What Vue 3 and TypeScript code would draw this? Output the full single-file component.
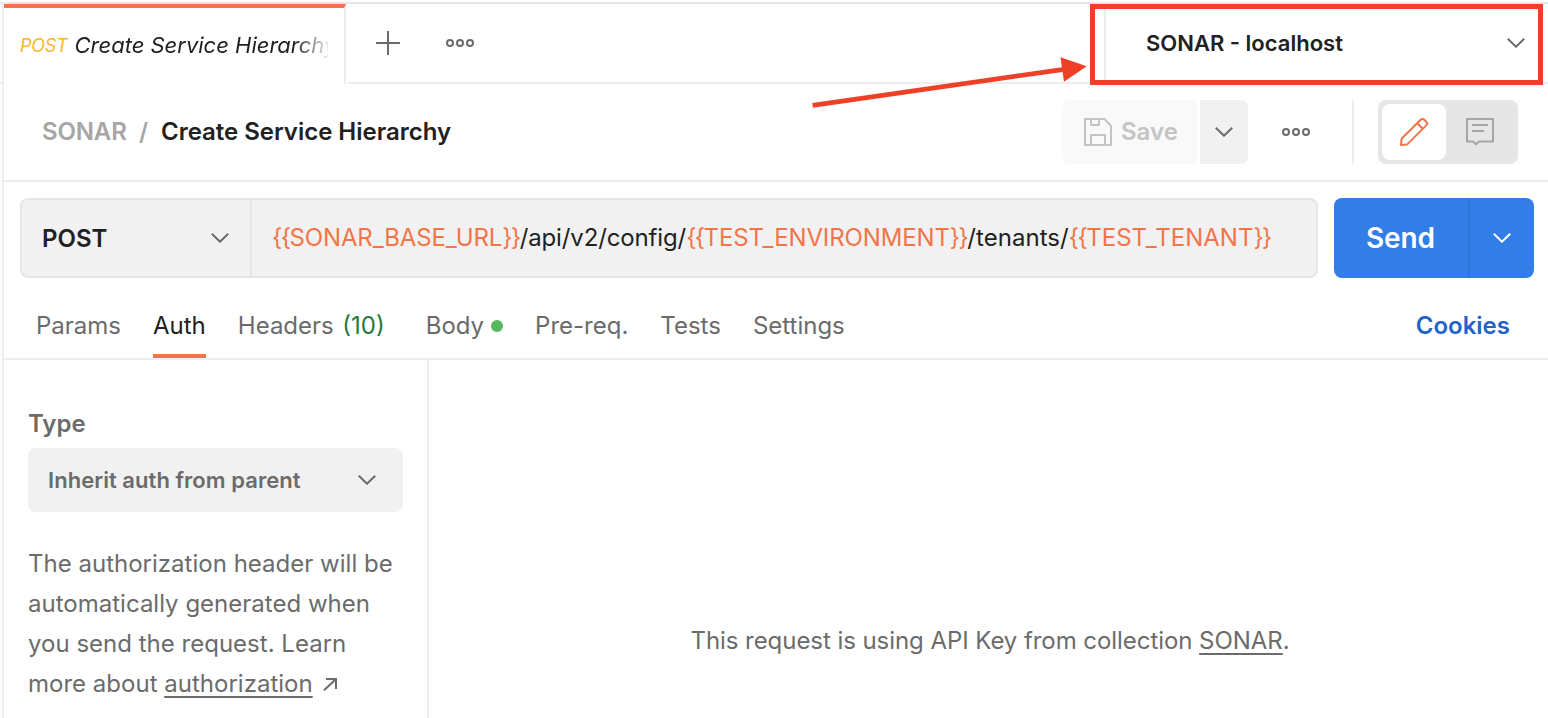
<script setup lang="ts">
import { h, type FunctionalComponent } from 'vue'

interface RequestTab {
  label: string
  count?: string
  dot?: boolean
  active?: boolean
}

interface UrlPart {
  text: string
  kind: 'path' | 'variable'
  spacing: 'tight' | 'normal' | 'loose'
}

const requestTabs: RequestTab[] = [
  { label: 'Params' },
  { label: 'Auth', active: true },
  { label: 'Headers', count: '(10)' },
  { label: 'Body', dot: true },
  { label: 'Pre-req.' },
  { label: 'Tests' },
  { label: 'Settings' },
]

const url: UrlPart[] = [
  { text: 'SONAR_BASE_URL', kind: 'variable', spacing: 'tight' },
  { text: '/api/v2/config/', kind: 'path', spacing: 'tight' },
  { text: 'TEST_ENVIRONMENT', kind: 'variable', spacing: 'tight' },
  { text: '/tenants/', kind: 'path', spacing: 'loose' },
  { text: 'TEST_TENANT', kind: 'variable', spacing: 'normal' },
]

const Chevron: FunctionalComponent = () =>
  h('svg', { width: 18, height: 10, viewBox: '0 0 18 10', fill: 'none', stroke: 'currentColor', 'stroke-width': 2 }, [
    h('path', { d: 'M.8.8 9 8.7 17.2.8' }),
  ])

const Dots: FunctionalComponent = () =>
  h(
    'svg',
    { width: 28, height: 8, viewBox: '0 0 28 8', fill: 'none', stroke: 'currentColor', 'stroke-width': 2 },
    [4, 14, 24].map((cx) => h('circle', { cx, cy: 4, r: 3 })),
  )
</script>

<template>
  <div class="window">
    <div class="gutter"><i></i></div>
    <main class="pane">
      <div class="tabbar">
        <div class="file-tab">
          <span class="verb">POST</span>
          <span class="file-name">Create Service Hierarchy</span>
        </div>
        <div class="tab-tools">
          <svg width="24" height="24" viewBox="0 0 24 24" fill="none" stroke="currentColor" stroke-width="2">
            <path d="M12 0v24M0 12h24" />
          </svg>
          <Dots />
        </div>
        <div class="environment">
          <span>SONAR - localhost</span>
          <Chevron />
        </div>
      </div>

      <header class="title-row">
        <div class="crumbs">
          <span class="parent">SONAR</span>
          <span class="slash">/</span>
          <span class="current">Create Service Hierarchy</span>
        </div>
        <button class="save">
          <svg width="28" height="28" viewBox="0 0 28 28" fill="none" stroke="currentColor" stroke-width="2" stroke-linejoin="round">
            <path d="M1 1h19.5L27 8v19H1z" />
            <path d="M7 1v6h8V1M7 27V17h14v10" />
          </svg>
          <span>Save</span>
        </button>
        <button class="save-more"><Chevron /></button>
        <div class="more"><Dots /></div>
        <div class="mode">
          <span class="mode-on">
            <svg width="28" height="28" viewBox="0 0 28 28" fill="none" stroke="currentColor" stroke-width="2" stroke-linejoin="round">
              <path d="M1 27 1.600 20.800 20.400 2c1.300-1.300 2.800-1.300 4.100 0l1.500 1.500c1.300 1.300 1.300 2.800 0 4.100L7.200 26.400z" />
              <path d="M17.200 5.200 22.800 10.800" />
            </svg>
          </span>
          <span class="mode-off">
            <svg width="28" height="28" viewBox="0 0 28 28" fill="none" stroke="currentColor" stroke-width="2" stroke-linejoin="round">
              <path d="M1 1h26v22.500H13L10 26.200 7 23.500H1z" />
              <path d="M6 7h16M6 13h12" />
            </svg>
          </span>
        </div>
      </header>

      <div class="request-row">
        <div class="request-box">
          <div class="method"><span>POST</span><Chevron /></div>
          <div class="url">
            <template v-for="part in url" :key="part.text">
              <span v-if="part.kind === 'variable'" class="variable"><span class="brace" v-text="'{{'"></span><span :class="part.spacing">{{ part.text }}</span><span class="brace" v-text="'}}'"></span></span>
              <span v-else :class="part.spacing">{{ part.text }}</span>
            </template>
          </div>
        </div>
        <div class="send">
          <span class="send-label">Send</span>
          <span class="send-more"><Chevron /></span>
        </div>
      </div>

      <nav class="request-tabs">
        <a v-for="tab in requestTabs" :key="tab.label" :class="{ active: tab.active, counted: tab.count }">
          {{ tab.label }}<em v-if="tab.count">{{ tab.count }}</em><i v-if="tab.dot"></i>
        </a>
        <a class="cookies">Cookies</a>
      </nav>

      <div class="content">
        <aside class="auth-side">
          <div class="type-label">Type</div>
          <div class="type-select"><span>Inherit auth from parent</span><Chevron /></div>
          <p>
            The authorization header will be<br />automatically generated when<br />you send the request. Learn<br />more about
            <u>authorization</u>
            <svg width="14" height="13" viewBox="0 0 14 13" fill="none" stroke="currentColor" stroke-width="2">
              <path d="M3 1h10v10M13 1 1 12.300" />
            </svg>
          </p>
        </aside>
        <section class="auth-main">This request is using API Key from collection <u>SONAR</u>.</section>
      </div>
    </main>

    <svg class="callout" width="1548" height="120" viewBox="0 0 1548 120">
      <rect x="1092.500" y="6.500" width="448" height="76" fill="none" stroke="#ee4027" stroke-width="5" />
      <path d="M812.600 105.400 1064 69.300" stroke="#ee4027" stroke-width="4.800" />
      <path d="M1060.500 57.300 1086.700 66.300 1064 81.800z" fill="#ee4027" />
    </svg>
  </div>
</template>

<style>
body {
  margin: 0;
  background: #fff;
}
</style>

<style scoped>
.window {
  position: relative;
  box-sizing: border-box;
  display: flex;
  width: 1548px;
  height: 718px;
  padding-top: 2px;
  overflow: hidden;
  font: 400 24px/40px Inter, 'Liberation Sans', sans-serif;
  color: #6b6b6b;
}
.window * {
  box-sizing: border-box;
}
.window svg {
  display: block;
  flex: none;
}
.gutter {
  width: 4px;
  border-top: 2px solid #e6e6e6;
  border-right: 2px solid #ededed;
  padding-top: 78px;
  background: #fdfdfd;
}
.gutter i {
  display: block;
  height: 2px;
  background: #ededed;
}
.pane {
  flex: 1;
  display: flex;
  flex-direction: column;
  min-width: 0;
  border-top: 2px solid #e6e6e6;
}
.tabbar {
  display: flex;
  height: 80px;
}
.file-tab {
  display: flex;
  align-items: center;
  width: 342px;
  margin-right: 2px;
  padding: 0 16px;
  border-top: 4px solid #f27549;
  border-right: 2px solid #ededed;
  font-style: italic;
  white-space: nowrap;
}
.verb {
  width: 54.500px;
  flex: none;
  font-size: 18px;
  letter-spacing: -0.2px;
  color: #fcb52f;
}
.file-name {
  flex: 1;
  min-width: 0;
  margin-top: -2px;
  overflow: hidden;
  font-size: 22px;
  color: #212121;
  -webkit-mask-image: linear-gradient(to right, #000 calc(100% - 34px), rgba(0, 0, 0, 0.08));
  mask-image: linear-gradient(to right, #000 calc(100% - 34px), rgba(0, 0, 0, 0.08));
}
.tab-tools {
  flex: 1;
  display: flex;
  align-items: center;
  gap: 46px;
  padding-left: 28px;
  border-bottom: 2px solid #ededed;
}
.environment {
  display: flex;
  align-items: center;
  justify-content: space-between;
  width: 444px;
  padding: 0 23px 0 40px;
  border-left: 2px solid #ededed;
  border-bottom: 2px solid #ededed;
  font-size: 22px;
  font-weight: 600;
  color: #212121;
}
.environment svg {
  color: #6b6b6b;
}
.title-row {
  display: flex;
  align-items: center;
  height: 98px;
  padding: 0 30px 0 38px;
  border-bottom: 2px solid #ededed;
}
.crumbs {
  flex: 1;
  display: flex;
  color: #a6a6a6;
}
.parent {
  width: 85px;
  font-weight: 600;
  letter-spacing: -0.15px;
}
.slash {
  width: 34px;
  padding-left: 12px;
  font-weight: 600;
}
.current {
  font-weight: 600;
  color: #212121;
  letter-spacing: -0.02px;
}
button {
  border: 0;
  font: inherit;
}
.save {
  display: flex;
  align-items: center;
  gap: 9px;
  width: 136px;
  height: 64px;
  padding: 0 0 0 22px;
  margin-right: 2px;
  border-radius: 8px 4px 4px 8px;
  background: #f9f9f9;
  color: #c4c4c4;
  font-weight: 600;
}
.save-more {
  display: grid;
  place-items: center;
  width: 48px;
  height: 64px;
  padding: 0;
  border-radius: 0 8px 8px 0;
  background: #f1f1f1;
  color: #6b6b6b;
}
.more {
  display: flex;
  align-items: center;
  width: 106px;
  height: 64px;
  padding-left: 34px;
  margin-right: 24px;
  border-right: 2px solid #ededed;
}
.mode {
  display: flex;
  width: 140px;
  height: 64px;
  padding: 4px;
  border-radius: 8px;
  background: #e6e6e6;
}
.mode span {
  display: grid;
  place-items: center;
}
.mode-on {
  width: 64px;
  border-radius: 8px;
  background: #fff;
  color: #f27549;
}
.mode-off {
  width: 68px;
  color: #a6a6a6;
}
.request-row {
  display: flex;
  gap: 16px;
  padding: 16px 14px 0 16px;
}
.request-box {
  flex: 1;
  display: flex;
  height: 80px;
  border: 2px solid #e6e6e6;
  border-radius: 8px;
  background: #f1f1f1;
}
.method {
  display: flex;
  align-items: center;
  justify-content: space-between;
  width: 230px;
  padding: 0 21px 0 20px;
  border-right: 2px solid #e6e6e6;
  font-weight: 600;
  color: #212121;
}
.method span {
  padding-top: 2px;
}
.method svg {
  color: #6b6b6b;
}
.url {
  display: flex;
  align-items: center;
  padding-left: 20px;
  color: #212121;
}
.variable {
  color: #f27549;
}
.brace {
  letter-spacing: -1.5px;
}
.tight {
  letter-spacing: -0.13px;
}
.loose {
  letter-spacing: 0.05px;
}
.send {
  display: flex;
  width: 200px;
  height: 80px;
  overflow: hidden;
  border-radius: 8px;
  background: #327de6;
  color: #fff;
}
.send-label {
  display: grid;
  place-items: center;
  width: 136px;
  padding-right: 1px;
  border-right: 2px solid #2d72d6;
  font-size: 28px;
  font-weight: 600;
  letter-spacing: -0.1px;
}
.send-more {
  flex: 1;
  display: grid;
  place-items: center;
}
.request-tabs {
  display: flex;
  gap: 32px;
  height: 82px;
  padding: 0 38px 0 32px;
  border-bottom: 2px solid #ededed;
}
.request-tabs a {
  display: flex;
  align-items: center;
  height: 80px;
  padding-top: 16px;
  border-bottom: 0 solid #f27549;
}
.request-tabs .active {
  border-bottom-width: 4px;
  padding-top: 20px;
  color: #212121;
}
.request-tabs .counted {
  padding-right: 9px;
}
.request-tabs em {
  margin-left: 8.500px;
  font-style: normal;
  color: #26783b;
}
.request-tabs i {
  width: 12px;
  height: 12px;
  margin-left: 7px;
  border-radius: 50%;
  background: #55b861;
}
.request-tabs .cookies {
  margin-left: auto;
  font-weight: 600;
  color: #1f64cd;
}
.content {
  flex: 1;
  display: flex;
}
.auth-side {
  width: 425px;
  padding: 44px 24px 0;
  border-right: 2px solid #ededed;
}
.type-label {
  height: 44px;
  font-weight: 600;
}
.type-select {
  display: flex;
  align-items: center;
  justify-content: space-between;
  width: 375px;
  height: 64px;
  padding: 0 27px 0 20px;
  border-radius: 8px;
  background: #f1f1f1;
  font-size: 22px;
  font-weight: 600;
  letter-spacing: 0.04px;
}
p {
  margin: 32px 0 0;
  white-space: nowrap;
  letter-spacing: 0.01px;
}
u {
  text-decoration: underline 2px;
  text-decoration-skip-ink: none;
  text-underline-offset: 4px;
}
.window p svg {
  display: inline-block;
  margin: 0 0 1px 10px;
}
.auth-main {
  flex: 1;
  padding: 261px 0 0 261.500px;
  letter-spacing: -0.06px;
}
.callout {
  position: absolute;
  top: 0;
  left: 0;
}
</style>
